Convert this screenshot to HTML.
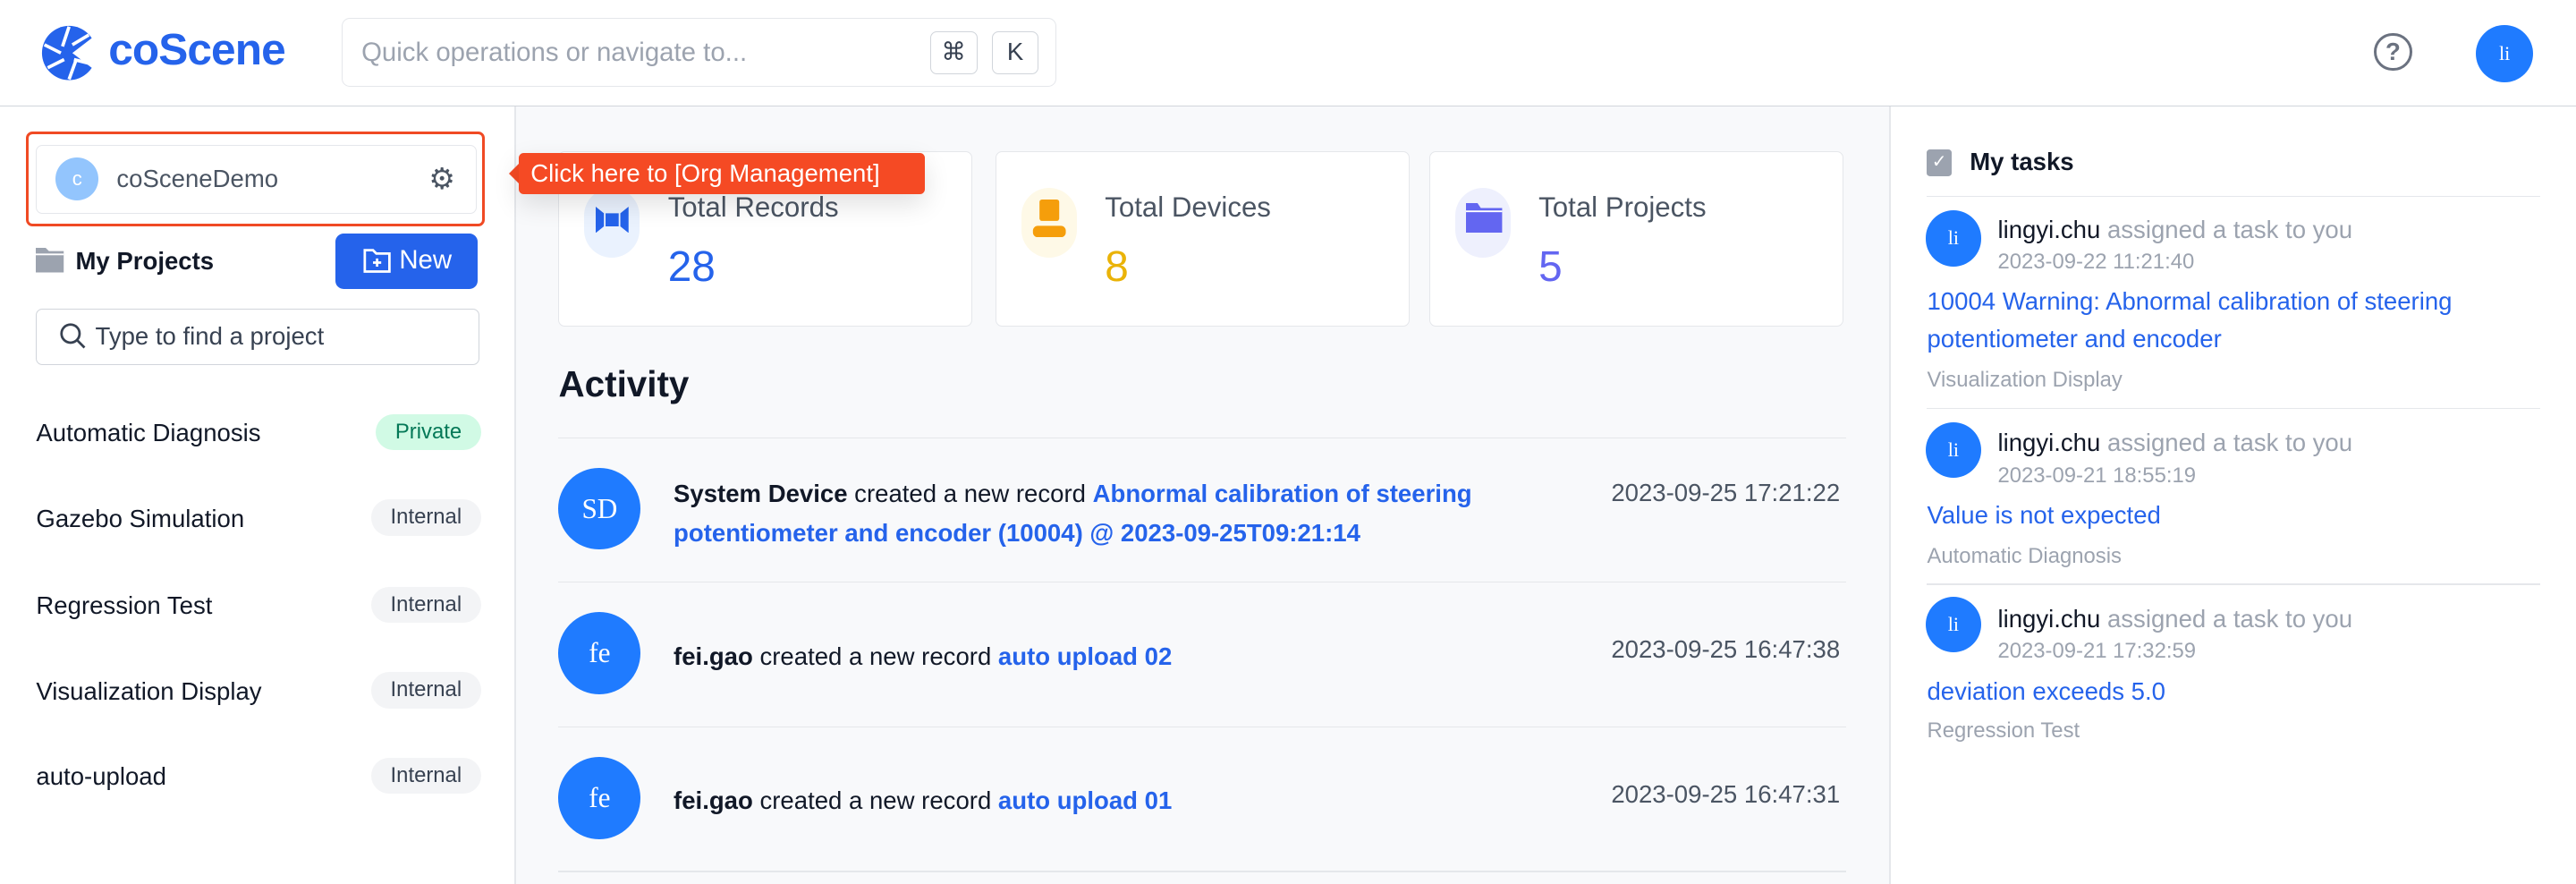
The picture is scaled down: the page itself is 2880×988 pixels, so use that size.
<!DOCTYPE html>
<html><head><meta charset="utf-8"><style>
html,body{margin:0;padding:0}
body{width:2880px;height:988px;overflow:hidden;background:#fff;font-family:"Liberation Sans",sans-serif}
#s{width:1568px;height:538px;position:relative;zoom:1.836735;overflow:hidden}
.a{position:absolute}
.t{position:absolute;white-space:nowrap}
.av{position:absolute;border-radius:50%;background:#1f7bff;color:#fff;font-family:"Liberation Serif",serif;display:flex;align-items:center;justify-content:center}
.badge{position:absolute;right:1275px;height:22px;line-height:22px;padding:0 12px;border-radius:11px;font-size:13px;background:#f3f4f6;color:#374151}
.card{position:absolute;top:92px;width:252px;height:107px;background:#fff;border:1px solid #e5e7eb;border-radius:4px;box-sizing:border-box}
.card .ic{position:absolute;left:15px;top:22px;width:34px;height:42px;border-radius:17px}
.card .tt{position:absolute;left:66px;top:24px;font-size:17px;color:#4b5563}
.card .n{position:absolute;left:66px;top:55px;font-size:26px;font-weight:500}
.row{position:absolute;left:340px;width:784px;height:88px;border-top:1px solid #e5e7eb}
.row .av{left:0;top:18px;width:50px;height:50px;font-size:17px}
.row .tx{position:absolute;left:70px;font-size:15px;line-height:24px;color:#111827;width:520px}
.row .tx b{font-weight:bold}.row .tx a{color:#2563eb;font-weight:bold;text-decoration:none}
.row .tm{position:absolute;right:4px;font-size:15px;color:#4b5563;top:32px}
.task .av{width:34px;height:34px;font-size:12px}
</style></head><body><div id="s">
<!-- header -->
<div class="a" style="left:0;top:64px;width:1568px;height:1px;background:#d1d5db"></div>
<svg class="a" style="left:25px;top:15px" width="36" height="34" viewBox="0 0 36 34">
<circle cx="17" cy="17" r="16.5" fill="#2563eb"/>
<path d="M19 17L36 4V30Z" fill="#fff"/>
<path d="M17 1L13 13M29 6L19 12M32 24L20 21M17 33L21 22M4 26L14 21M2 12L12 17" stroke="#fff" stroke-width="2"/>
</svg>
<div class="t" style="left:66px;top:14px;font-size:27px;font-weight:bold;color:#2563eb;letter-spacing:-0.5px">coScene</div>
<div class="a" style="left:208px;top:11px;width:435px;height:42px;border:1px solid #e5e7eb;border-radius:5px;box-sizing:border-box"></div>
<div class="t" style="left:220px;top:23px;font-size:16px;color:#9ca3af">Quick operations or navigate to...</div>
<div class="a" style="left:566px;top:19px;width:29px;height:26px;border:1px solid #d1d5db;border-radius:4px;box-sizing:border-box;text-align:center;line-height:24px;font-size:15px;color:#374151">⌘</div>
<div class="a" style="left:604px;top:19px;width:28px;height:26px;border:1px solid #d1d5db;border-radius:4px;box-sizing:border-box;text-align:center;line-height:24px;font-size:15px;color:#374151">K</div>
<div class="a" style="left:1445px;top:20px;width:20px;height:20px;border:2px solid #6b7280;border-radius:50%;text-align:center;line-height:20px;font-size:15px;font-weight:bold;color:#6b7280">?</div>
<div class="av" style="left:1507px;top:15px;width:35px;height:35px;font-size:12px">li</div>
<!-- sidebar -->
<div class="a" style="left:313px;top:65px;width:1px;height:473px;background:#e5e7eb"></div>
<div class="a" style="left:314px;top:65px;width:836px;height:473px;background:#f8f9fb"></div>
<div class="a" style="left:1150px;top:65px;width:1px;height:473px;background:#e5e7eb"></div>
<div class="a" style="left:16px;top:80px;width:279px;height:58px;border:2px solid #f04a24;border-radius:4px;box-sizing:border-box"></div>
<div class="a" style="left:22px;top:88px;width:268px;height:42px;border:1px solid #e5e7eb;border-radius:4px;box-sizing:border-box"></div>
<div class="a" style="left:34px;top:96px;width:26px;height:26px;border-radius:50%;background:#93c5fd;color:#fff;font-size:12px;text-align:center;line-height:26px">c</div>
<div class="t" style="left:71px;top:100px;font-size:15px;color:#4b5563">coSceneDemo</div>
<div class="t" style="left:261px;top:98px;font-size:18px;color:#4b5563">⚙</div>
<svg class="a" style="left:22px;top:151px" width="17" height="15" viewBox="0 0 17 15"><path d="M0 0H6L8 2H17V15H0Z" fill="#9ca3af"/><path d="M0 4H17" stroke="#fff" stroke-width="1"/></svg>
<div class="t" style="left:46px;top:150px;font-size:15px;font-weight:bold;color:#111827">My Projects</div>
<div class="a" style="left:204px;top:142px;width:87px;height:34px;background:#2563eb;border-radius:5px"></div>
<svg class="a" style="left:221px;top:150px" width="17" height="16" viewBox="0 0 17 16"><path d="M1 2H6L8 4H16V15H1Z" fill="none" stroke="#fff" stroke-width="1.5"/><path d="M8.5 7V12M6 9.5H11" stroke="#fff" stroke-width="1.5"/></svg>
<div class="t" style="left:243px;top:149px;font-size:16px;font-weight:500;color:#fff">New</div>
<div class="a" style="left:22px;top:188px;width:270px;height:34px;border:1px solid #d1d5db;border-radius:4px;box-sizing:border-box"></div>
<svg class="a" style="left:36px;top:196px" width="17" height="17" viewBox="0 0 17 17"><circle cx="7" cy="7" r="5.5" fill="none" stroke="#374151" stroke-width="1.5"/><path d="M11 11L15.5 15.5" stroke="#374151" stroke-width="1.5"/></svg>
<div class="t" style="left:58px;top:196px;font-size:15px;color:#374151">Type to find a project</div>
<div class="t" style="left:22px;top:255px;font-size:15px;color:#111827">Automatic Diagnosis</div>
<div class="badge" style="top:252px;background:#d1fae5;color:#047857">Private</div>
<div class="t" style="left:22px;top:307px;font-size:15px;color:#111827">Gazebo Simulation</div>
<div class="badge" style="top:304px">Internal</div>
<div class="t" style="left:22px;top:360px;font-size:15px;color:#111827">Regression Test</div>
<div class="badge" style="top:357px">Internal</div>
<div class="t" style="left:22px;top:412px;font-size:15px;color:#111827">Visualization Display</div>
<div class="badge" style="top:409px">Internal</div>
<div class="t" style="left:22px;top:464px;font-size:15px;color:#111827">auto-upload</div>
<div class="badge" style="top:461px">Internal</div>
<!-- cards -->
<div class="card" style="left:340px"><div class="ic" style="background:#eaf2fe"></div>
<svg class="a" style="left:22px;top:33px" width="20" height="16" viewBox="0 0 20 16"><path d="M0 0L5 4V12L0 16ZM20 0L15 4V12L20 16ZM6 4H14V12H6Z" fill="#2563eb"/></svg>
<div class="tt">Total Records</div><div class="n" style="color:#2563eb">28</div></div>
<div class="card" style="left:606px"><div class="ic" style="background:#fef9e7"></div>
<svg class="a" style="left:21px;top:29px" width="22" height="23" viewBox="0 0 22 23"><rect x="5" y="0" width="12" height="13" rx="1.5" fill="#f59e0b"/><rect x="1" y="16" width="20" height="7" rx="3" fill="#f59e0b"/></svg>
<div class="tt">Total Devices</div><div class="n" style="color:#eab308">8</div></div>
<div class="card" style="left:870px"><div class="ic" style="background:#eef0fd"></div>
<svg class="a" style="left:22px;top:31px" width="22" height="18" viewBox="0 0 22 18"><path d="M0 0H7L9 3H22V18H0Z" fill="#6366f1"/><path d="M0 5H22" stroke="#fff" stroke-width="1"/></svg>
<div class="tt">Total Projects</div><div class="n" style="color:#6366f1">5</div></div>
<div class="t" style="left:340px;top:221px;font-size:22px;font-weight:bold;color:#111827">Activity</div>
<div class="row" style="top:266px"><div class="av">SD</div><div class="tx" style="top:22px"><b>System Device</b> created a new record <a>Abnormal calibration of steering potentiometer and encoder (10004) @ 2023-09-25T09:21:14</a></div><div class="tm" style="top:25px">2023-09-25 17:21:22</div></div>
<div class="row" style="top:354px"><div class="av">fe</div><div class="tx" style="top:33px"><b>fei.gao</b> created a new record <a>auto upload 02</a></div><div class="tm">2023-09-25 16:47:38</div></div>
<div class="row" style="top:442px"><div class="av">fe</div><div class="tx" style="top:33px"><b>fei.gao</b> created a new record <a>auto upload 01</a></div><div class="tm">2023-09-25 16:47:31</div></div>
<div class="a" style="left:340px;top:530px;width:784px;height:1px;background:#e5e7eb"></div>
<!-- tasks -->
<div class="a" style="left:1173px;top:91px;width:15px;height:16px;background:#9ca3af;border-radius:2px;color:#fff;font-size:11px;text-align:center;line-height:16px">✓</div>
<div class="t" style="left:1199px;top:90px;font-size:15px;font-weight:bold;color:#111827">My tasks</div>
<div class="a" style="left:1173px;top:119px;width:373px;height:1px;background:#e5e7eb"></div>
<div class="task">
<div class="av" style="left:1172px;top:128px">li</div>
<div class="t" style="left:1216px;top:131px;font-size:15px;color:#9ca3af"><span style="color:#111827;font-weight:500">lingyi.chu</span> assigned a task to you</div>
<div class="t" style="left:1216px;top:152px;font-size:13px;color:#9ca3af">2023-09-22 11:21:40</div>
<div class="a" style="left:1173px;top:172px;width:360px;font-size:15px;line-height:23px;color:#2563eb">10004 Warning: Abnormal calibration of steering potentiometer and encoder</div>
<div class="t" style="left:1173px;top:224px;font-size:13px;color:#9ca3af">Visualization Display</div>
</div>
<div class="a" style="left:1173px;top:248px;width:373px;height:1px;background:#e5e7eb"></div>
<div class="task">
<div class="av" style="left:1172px;top:257px">li</div>
<div class="t" style="left:1216px;top:261px;font-size:15px;color:#9ca3af"><span style="color:#111827;font-weight:500">lingyi.chu</span> assigned a task to you</div>
<div class="t" style="left:1216px;top:282px;font-size:13px;color:#9ca3af">2023-09-21 18:55:19</div>
<div class="t" style="left:1173px;top:305px;font-size:15px;color:#2563eb">Value is not expected</div>
<div class="t" style="left:1173px;top:331px;font-size:13px;color:#9ca3af">Automatic Diagnosis</div>
</div>
<div class="a" style="left:1173px;top:355px;width:373px;height:1px;background:#e5e7eb"></div>
<div class="task">
<div class="av" style="left:1172px;top:363px">li</div>
<div class="t" style="left:1216px;top:368px;font-size:15px;color:#9ca3af"><span style="color:#111827;font-weight:500">lingyi.chu</span> assigned a task to you</div>
<div class="t" style="left:1216px;top:389px;font-size:13px;color:#9ca3af">2023-09-21 17:32:59</div>
<div class="t" style="left:1173px;top:412px;font-size:15px;color:#2563eb">deviation exceeds 5.0</div>
<div class="t" style="left:1173px;top:437px;font-size:13px;color:#9ca3af">Regression Test</div>
</div>
<!-- tooltip on top -->
<div class="a" style="left:310px;top:99px;width:0;height:0;border-top:7px solid transparent;border-bottom:7px solid transparent;border-right:7px solid #f54a24"></div>
<div class="a" style="left:316px;top:93px;width:247px;height:25px;background:#f54a24;border-radius:3px;box-shadow:0 6px 16px rgba(0,0,0,.12)"></div>
<div class="t" style="left:323px;top:97px;font-size:15px;color:#fff">Click here to [Org Management]</div>
</div></body></html>
